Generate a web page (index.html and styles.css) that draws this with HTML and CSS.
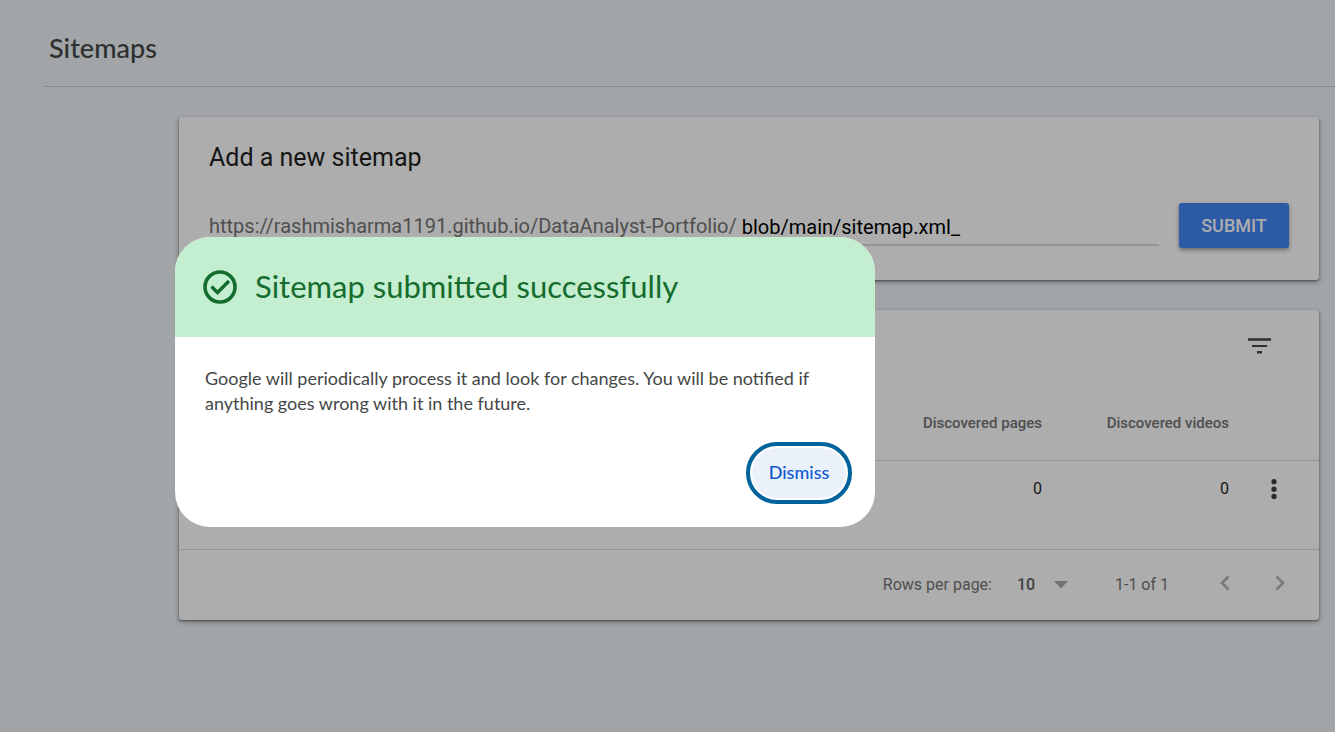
FILE: index.html
```html
<!DOCTYPE html>
<html lang="en">
<head>
<meta charset="utf-8">
<title>Sitemaps</title>
<link rel="stylesheet" href="styles.css">
</head>
<body>
<div class="page">
  <header class="page-header">
    <h1 class="page-title">Sitemaps</h1>
  </header>
  <main class="content">
    <section class="card add-card">
      <h2 class="card-title">Add a new sitemap</h2>
      <form class="add-form">
        <label class="url-prefix" for="sitemap-url">https://rashmisharma1191.github.io/DataAnalyst-Portfolio/</label>
        <input class="url-input" id="sitemap-url" type="text" value="blob/main/sitemap.xml_">
        <button class="submit-button" type="button">SUBMIT</button>
      </form>
    </section>
    <section class="card list-card">
      <div class="toolbar">
        <button class="icon-button" type="button" aria-label="Filter">
          <svg width="24" height="16" viewBox="0 0 24 16" fill="#444746"><path d="M0 .300h23v2.500H0zM4 7h15v2H4zM9 13h5v2.500H9z"/></svg>
        </button>
      </div>
      <table class="sitemaps">
        <thead>
          <tr><td></td><th class="count">Discovered pages</th><th class="count">Discovered videos</th><td class="actions"></td></tr>
        </thead>
        <tbody>
          <tr><td></td><td class="count">0</td><td class="count">0</td><td class="actions">
            <button class="icon-button" type="button" aria-label="More options">
              <svg width="6" height="20" viewBox="0 0 6 20" fill="#3c4043"><circle cx="3" cy="2.700" r="2.600"/><circle cx="3" cy="10.200" r="2.600"/><circle cx="3" cy="17.400" r="2.600"/></svg>
            </button></td></tr>
        </tbody>
      </table>
      <footer class="pager">
        <label for="rows">Rows per page:</label>
        <span class="rows-box">
          <select class="rows" id="rows"><option>10</option></select>
          <svg width="14" height="8" viewBox="0 0 14 8" fill="#a9a9a9"><path d="M0 0h14L7 7.500z"/></svg>
        </span>
        <span class="range">1-1 of 1</span>
        <span class="page-buttons">
          <button class="icon-button" type="button" aria-label="Previous page">
            <svg width="10" height="16" viewBox="0 0 10 16" fill="none" stroke="#b4b4b4" stroke-width="2.600"><path d="M8.500 1.500 2 8l6.500 6.500"/></svg>
          </button>
          <button class="icon-button" type="button" aria-label="Next page">
            <svg width="10" height="16" viewBox="0 0 10 16" fill="none" stroke="#b4b4b4" stroke-width="2.600"><path d="M1.500 1.500 8 8l-6.500 6.500"/></svg>
          </button>
        </span>
      </footer>
    </section>
  </main>
</div>
<div class="scrim"></div>
<div class="dialog" role="dialog" aria-modal="true" aria-labelledby="dialog-title">
  <div class="dialog-head">
    <svg width="36" height="36" viewBox="0 0 36 36" fill="none" stroke="#146c2e"><circle cx="18" cy="18" r="15" stroke-width="3.600"/><path d="m9.500 17.500 6 6L27 12" stroke-width="3.400"/></svg>
    <h2 class="dialog-title" id="dialog-title">Sitemap submitted successfully</h2>
  </div>
  <div class="dialog-body">
    <p class="dialog-text">Google will periodically process it and look for changes. You will be notified if anything goes wrong with it in the future.</p>
    <button class="dismiss" type="button">Dismiss</button>
  </div>
</div>
</body>
</html>
```
FILE: styles.css
```css
* { box-sizing: border-box; }
body {
  margin: 0;
  background: #eef3f7;
  font-family: Roboto, "Liberation Sans", sans-serif;
  color: #1f1f1f;
}
h1, h2, p { margin: 0; font-weight: 400; }
button, input, select { font: inherit; border: 0; background: none; padding: 0; margin: 0; outline: 0; }
svg { display: block; }

.page-header {
  margin-left: 44px;
  padding: 32px 5px 22px;
  border-bottom: 1px solid #c4c7c9;
}
.page-title {
  font-family: Lato, sans-serif;
  font-size: 27px;
  line-height: 32px;
  font-weight: 500;
  color: #444746;
}
.content {
  display: flex;
  flex-direction: column;
  gap: 30px;
  padding: 30px 16px 30px 179px;
}
.card {
  background: #fff;
  border-radius: 3px;
  box-shadow: 0 2px 5px rgba(0, 0, 0, .35), 0 1px 2px rgba(0, 0, 0, .35);
}
.add-card { padding: 25px 30px 32px; }
.card-title { font-size: 25px; line-height: 32px; }
.add-form { display: flex; align-items: center; margin-top: 29px; font-size: 20px; }
.url-prefix { color: #757575; }
.url-input {
  flex: 1;
  min-width: 0;
  height: 36px;
  margin: 4px 20px 0 5px;
  border-bottom: 2px solid #dcdcdc;
  color: #000;
}
.submit-button {
  width: 110px;
  height: 45px;
  border-radius: 3px;
  background: #4285f4;
  color: #fff;
  font-size: 18px;
  font-weight: 500;
  box-shadow: 0 2px 4px rgba(0, 0, 0, .4);
}
.icon-button { display: inline-flex; }
.toolbar { display: flex; justify-content: flex-end; padding: 28px 47px 0 0; }
.sitemaps { width: 100%; margin-top: 32px; border-collapse: collapse; font-size: 16px; }
.sitemaps tr { border-bottom: 1px solid #dcdcdc; }
.sitemaps th { height: 74px; font-size: 15px; font-weight: 500; color: #757575; }
.sitemaps td { height: 74px; padding: 0; }
.sitemaps tbody td { height: 89px; padding: 18px 0 0; vertical-align: top; }
.sitemaps .count { width: 187px; padding-right: 0; padding-left: 0; text-align: right; }
.sitemaps .actions { width: 90px; padding-left: 42px; }
.pager {
  display: flex;
  align-items: center;
  justify-content: flex-end;
  height: 70px;
  padding-right: 34px;
  font-size: 16px;
  color: #757575;
}
.rows-box { display: flex; align-items: center; margin-left: 25px; }
.rows { appearance: none; width: 37px; font-weight: 500; color: #616161; }
.range { margin: 0 51px 0 47px; }
.page-buttons { display: flex; gap: 45px; padding-bottom: 4px; }

.scrim { position: fixed; inset: 0; background: rgba(0, 0, 0, .32); }
.dialog {
  position: absolute;
  top: 237px;
  left: 175px;
  width: 700px;
  border-radius: 35px;
  background: #fff;
  overflow: hidden;
  font-family: Lato, sans-serif;
}
.dialog-head {
  display: flex;
  align-items: center;
  gap: 17px;
  height: 100px;
  padding: 0 27px;
  background: #c4eed0;
}
.dialog-title { padding-bottom: 2px; font-size: 31px; line-height: 40px; color: #146c2e; }
.dialog-body { display: flex; flex-direction: column; padding: 29px 27px 27px 30px; }
.dialog-text { font-size: 18px; line-height: 25px; color: #444746; }
.dismiss {
  align-self: flex-end;
  width: 98px;
  height: 54px;
  margin-top: 30px;
  padding-bottom: 2px;
  border: 2px solid #fff;
  border-radius: 27px;
  background: #eaf1fb;
  background-clip: padding-box;
  outline: 4px solid #00639b;
  color: #0b57d0;
  font-size: 18px;
  font-weight: 500;
}
```
